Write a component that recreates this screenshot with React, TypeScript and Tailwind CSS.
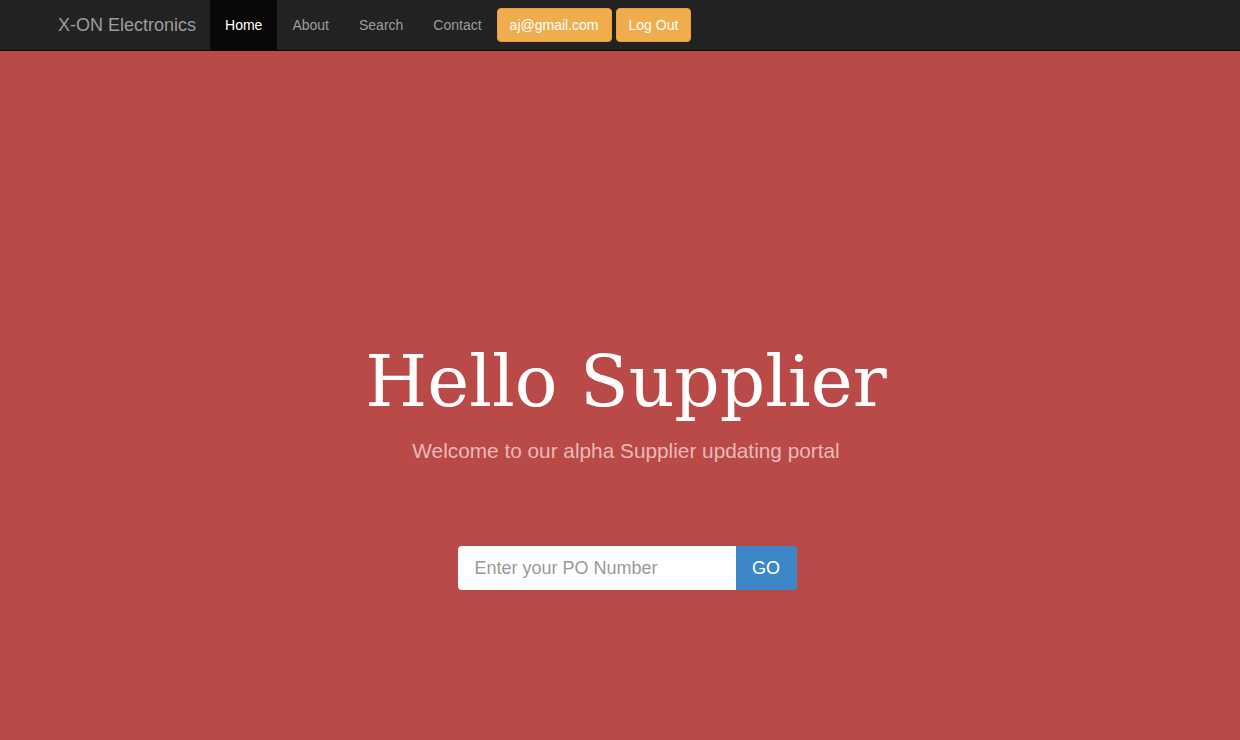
export default function App() {
  const links = ["About", "Search", "Contact"];
  return (
    <div className="min-h-[740px] h-screen flex flex-col bg-[#b94a48] font-['Liberation_Sans',Arial,sans-serif]">
      <nav className="h-[51px] shrink-0 bg-[#222222] border-b border-[#080808] flex items-stretch pl-[58px]">
        <a className="flex items-center pr-[14px] text-[18px] text-[#9d9d9d]">X-ON Electronics</a>
        <a className="flex items-center px-[15px] bg-[#080808] text-white text-[14px]">Home</a>
        {links.map((l) => (
          <a key={l} className="flex items-center px-[15px] text-[14px] text-[#9d9d9d]">
            {l}
          </a>
        ))}
        <div className="flex items-center gap-[4px]">
          <button className="h-[34px] px-[12px] rounded-[4px] bg-[#f0ad4e] border border-[#eea236] text-white text-[14px]">
            aj@gmail.com
          </button>
          <button className="h-[34px] px-[12px] rounded-[4px] bg-[#f0ad4e] border border-[#eea236] text-white text-[14px]">
            Log Out
          </button>
        </div>
      </nav>

      <main className="flex-1 flex flex-col items-center pl-[12px]">
        <h1 className="mt-[291px] text-white text-[71px] leading-[80px] font-light font-['DejaVu_Serif',serif]">
          Hello Supplier
        </h1>
        <p className="mt-[15px] text-[20.8px] leading-[28px] text-[#ebb9b8]">Welcome to our alpha Supplier updating portal</p>

        <div className="mt-[81px] flex pl-[2px]">
          <input
            className="w-[278px] h-[44px] px-[17px] bg-white rounded-l-[4px] text-[18px] text-[#555] placeholder:text-[#999] outline-none"
            placeholder="Enter your PO Number"
          />
          <button className="w-[61px] h-[44px] rounded-r-[4px] bg-[#3d87c9] text-white text-[18px]">GO</button>
        </div>
      </main>
    </div>
  );
}
